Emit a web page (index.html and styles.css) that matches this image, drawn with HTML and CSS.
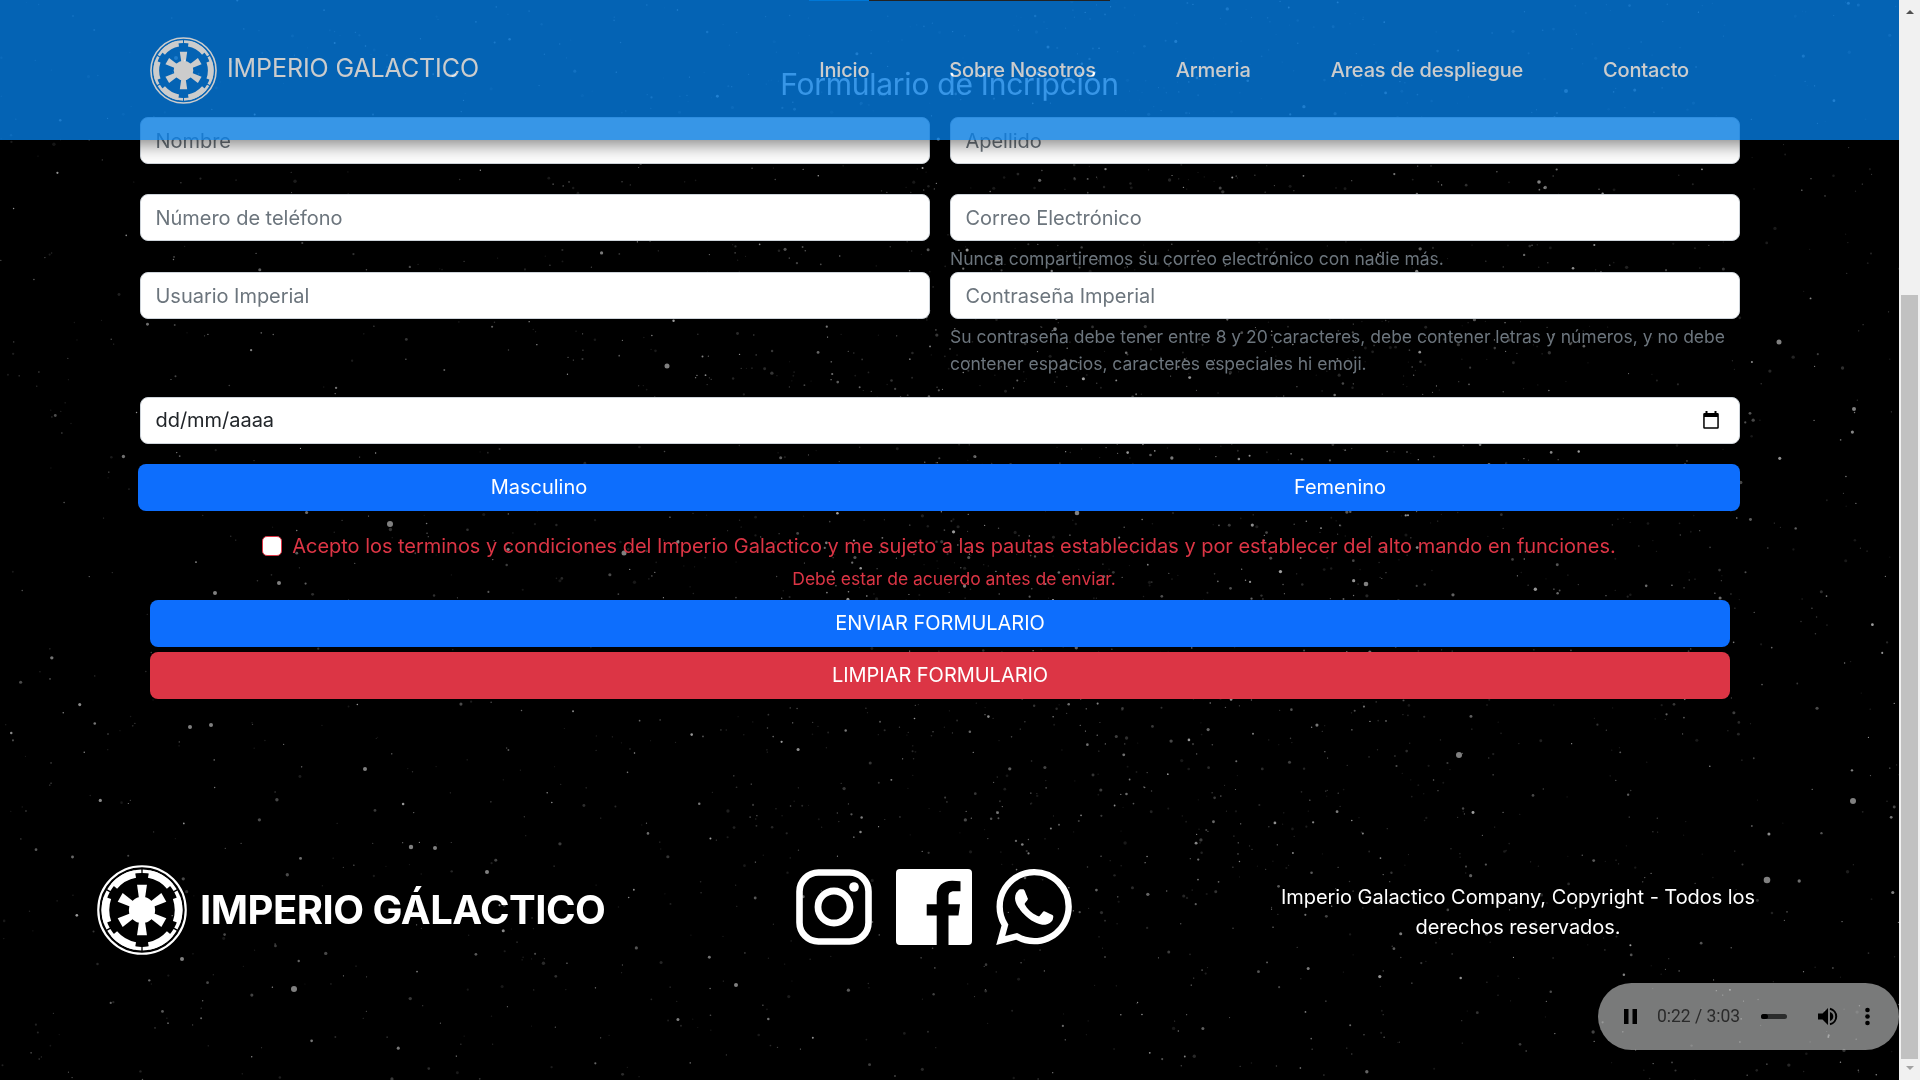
FILE: index.html
```html
<!DOCTYPE html>
<html lang="es">
<head>
<meta charset="utf-8">
<title>Imperio Galactico</title>
<link rel="stylesheet" href="styles.css">
</head>
<body>
<svg width="0" height="0" class="defs">
  <defs>
    <symbol id="emblem" viewBox="-50 -50 100 100">
      <circle r="48.600" fill="none" stroke="currentColor" stroke-width="2.400"/>
      <g fill="none" stroke="currentColor">
        <circle r="43" stroke-width="4" pathLength="360" stroke-dasharray="58 2" stroke-dashoffset="29"/>
        <circle r="40.700" stroke-width="8.600" pathLength="360" stroke-dasharray="39 21" stroke-dashoffset="19.500"/>
      </g>
      <circle r="14.600" fill="currentColor"/>
      <g fill="currentColor">
        <path id="spoke" d="M-5.500 -28H5.500L3.200 -12H-3.200Z"/>
        <use href="#spoke" transform="rotate(60)"/><use href="#spoke" transform="rotate(120)"/>
        <use href="#spoke" transform="rotate(180)"/><use href="#spoke" transform="rotate(240)"/>
        <use href="#spoke" transform="rotate(300)"/>
      </g>
    </symbol>
  </defs>
</svg>
<div class="window">
  <div class="page">
    <canvas class="stars" id="stars" width="1899" height="1080"></canvas>
    <main class="content">
      <h1 class="title">Formulario de Incripción</h1>
      <form class="form">
        <div class="field first">Nombre</div><div class="field first">Apellido</div>
        <div class="field">Número de teléfono</div>
        <div class="cell"><div class="field">Correo Electrónico</div><p class="help">Nunca compartiremos su correo electrónico con nadie más.</p></div>
        <div class="field">Usuario Imperial</div>
        <div class="cell"><div class="field">Contraseña Imperial</div><p class="help">Su contraseña debe tener entre 8 y 20 caracteres, debe contener letras y números, y no debe contener espacios, caracteres especiales hi emoji.</p></div>
        <div class="field date"><span>dd/mm/aaaa</span>
          <svg width="16" height="18" viewBox="0 0 16 18"><path d="M2.500 0h2v2h7V0h2v2H14.500a1.300 1.300 0 0 1 1.300 1.300V16.500A1.300 1.300 0 0 1 14.500 17.800H1.500A1.300 1.300 0 0 1 .2 16.500V3.300A1.300 1.300 0 0 1 1.500 2h1zM1.700 6v10.300h12.600V6z" fill-rule="evenodd"/></svg>
        </div>
      </form>
      <div class="group"><span>Masculino</span><span>Femenino</span></div>
      <div class="terms"><i class="check"></i><span>Acepto los terminos y condiciones del Imperio Galactico y me sujeto a las pautas establecidas y por establecer del alto mando en funciones.</span></div>
      <p class="warning">Debe estar de acuerdo antes de enviar.</p>
      <div class="actions"><div class="btn send">ENVIAR FORMULARIO</div><div class="btn clear">LIMPIAR FORMULARIO</div></div>
    </main>
    <footer class="footer">
      <div class="foot-brand"><svg class="foot-logo"><use href="#emblem"/></svg><strong>IMPERIO GÁLACTICO</strong></div>
      <div class="social">
        <svg viewBox="0 0 76 76"><rect x="3.500" y="3.500" width="69" height="69" rx="19" fill="none" stroke="#fff" stroke-width="6.600"/><circle cx="38" cy="38" r="16" fill="none" stroke="#fff" stroke-width="6.800"/><circle cx="58" cy="18" r="4.800" fill="#fff"/></svg>
        <svg viewBox="0 0 76 76"><path fill="#fff" d="M4 0H72A4 4 0 0 1 76 4V72A4 4 0 0 1 72 76H52.500V46.500H62.500L64 35.300H52.500V28C52.500 24.500 53.500 22.300 58.500 22.300H64.500V12.200A80 80 0 0 0 56 11.800C47 11.800 40.700 17 40.700 27V35.300H30.700V46.500H40.700V76H4A4 4 0 0 1 0 72V4A4 4 0 0 1 4 0Z"/></svg>
        <svg viewBox="0 0 24 24"><path fill="#fff" d="M17.472 14.382c-.297-.149-1.758-.867-2.030-.967-.273-.099-.471-.148-.67.150-.197.297-.767.966-.940 1.164-.173.199-.347.223-.644.075-.297-.150-1.255-.463-2.390-1.475-.883-.788-1.480-1.761-1.653-2.059-.173-.297-.018-.458.130-.606.134-.133.298-.347.446-.520.149-.174.198-.298.298-.497.099-.198.050-.371-.025-.520-.075-.149-.669-1.612-.916-2.207-.242-.579-.487-.5-.669-.510-.173-.008-.371-.010-.570-.010-.198 0-.520.074-.792.372-.272.297-1.040 1.016-1.040 2.479 0 1.462 1.065 2.875 1.213 3.074.149.198 2.096 3.200 5.077 4.487.709.306 1.262.489 1.694.625.712.227 1.360.195 1.871.118.571-.085 1.758-.719 2.006-1.413.248-.694.248-1.289.173-1.413-.074-.124-.272-.198-.570-.347m-5.421 7.403h-.004a9.870 9.870 0 01-5.031-1.378l-.361-.214-3.741.982.998-3.648-.235-.374a9.860 9.860 0 01-1.510-5.260c.001-5.450 4.436-9.884 9.888-9.884 2.640 0 5.122 1.030 6.988 2.898a9.825 9.825 0 012.893 6.994c-.003 5.450-4.437 9.884-9.885 9.884m8.413-18.297A11.815 11.815 0 0012.050 0C5.495 0 .160 5.335.157 11.892c0 2.096.547 4.142 1.588 5.945L.057 24l6.305-1.654a11.882 11.882 0 005.683 1.448h.005c6.554 0 11.890-5.335 11.893-11.893a11.821 11.821 0 00-3.480-8.413z"/></svg>
      </div>
      <p class="copy">Imperio Galactico Company, Copyright - Todos los derechos reservados.</p>
    </footer>
    <nav class="nav">
      <div class="brand"><svg class="nav-logo"><use href="#emblem"/></svg><span>IMPERIO GALACTICO</span></div>
      <div class="links"><a>Inicio</a><a>Sobre Nosotros</a><a>Armeria</a><a>Areas de despliegue</a><a>Contacto</a></div>
    </nav>
    <div class="topline"></div>
    <div class="player">
      <svg width="301" height="67" viewBox="0 0 301 67">
        <path d="M26 26h4.500v15H26zM34.500 26H39v15h-4.500z"/>
        <rect x="163" y="31" width="26" height="5" rx="2.500" fill="#2b2c2c"/><rect x="163" y="31" width="7" height="5" rx="2.500"/>
        <path d="M220 30.500h4.500l5.500-5.500v17l-5.500-5.500H220zM232 29q3.300 1.200 3.300 4.500T232 38z"/><path d="M232 25.700a8 8 0 0 1 0 15.600" fill="none" stroke="#000" stroke-width="2"/>
        <circle cx="269.500" cy="27" r="2.300"/><circle cx="269.500" cy="33.500" r="2.300"/><circle cx="269.500" cy="40" r="2.300"/>
      </svg>
      <span class="time">0:22 / 3:03</span>
    </div>
  </div>
  <div class="scroll"><i class="up"></i><div class="thumb"></div><i class="down"></i></div>
</div>
<script src="stars.js"></script>
</body>
</html>
```
FILE: styles.css
```css
* { box-sizing: border-box; margin: 0; padding: 0; }
body { width: 1920px; height: 1080px; overflow: hidden; background: #000; font: 400 20px/30px Inter, sans-serif; letter-spacing: -.03px; color: #fff; }
.defs { position: absolute; }
.window { display: flex; height: 1080px; }
.page { position: relative; width: 1899px; height: 1080px; overflow: hidden; }
.stars { position: absolute; left: 0; top: 0; }
.content { position: relative; padding: 65px 159px 0 138px; }
.title { font-size: 30px; line-height: 38px; font-weight: 400; letter-spacing: -.25px; text-align: center; padding-left: 21px; }
.form { display: grid; grid-template-columns: 790px 790px; column-gap: 20px; padding-left: 2px; margin-top: 14px; }
.field { height: 47px; padding: 0 15px 0 14.500px; border: 1px solid #ced4da; border-radius: 8px; background: #fff; color: #6c757d; line-height: 46px; }
.first { margin-bottom: 30px; }
.help { font-size: 17.500px; line-height: 27px; letter-spacing: -.02px; color: #6c757d; margin-top: 4px; }
.date { grid-column: 1 / 3; margin-top: 20px; display: flex; justify-content: space-between; align-items: center; padding: 0 20px 2px 14.500px; color: #212529; }
.group { display: flex; height: 47px; margin-top: 20px; border-radius: 8px; background: #0d6efd; line-height: 46px; text-align: center; }
.group span { flex: 1; padding-left: 1px; }
.terms { display: flex; justify-content: center; gap: 10px; margin-top: 20px; color: #dc3545; height: 30px; }
.check { width: 20px; height: 20px; margin-top: 5px; border: 1px solid #dc3545; border-radius: 5px; background: #fff; }
.warning { font-size: 17.500px; line-height: 26px; margin-top: 5px; padding-left: 30px; color: #dc3545; text-align: center; }
.actions { display: grid; gap: 5px; padding: 0 10px 0 12px; margin-top: 8px; }
.btn { height: 47px; border-radius: 8px; line-height: 46px; text-align: center; }
.send { background: #0d6efd; }
.clear { background: #dc3545; }
.footer { position: relative; display: grid; grid-template-columns: 699px 475px 1fr; align-items: start; padding: 165px 134px 0 97px; }
.foot-brand { display: flex; align-items: center; gap: 13px; height: 91px; font-size: 40px; letter-spacing: -.5px; }
.foot-logo { width: 90px; height: 90px; }
.social { display: flex; gap: 24px; padding-top: 5px; }
.social svg { width: 76px; height: 76px; }
.copy { text-align: center; padding-top: 18px; letter-spacing: -.06px; }
.nav { position: absolute; inset: 0 0 auto; height: 140px; display: flex; justify-content: space-between; align-items: center; padding: 0 210px 0 150px; background: #067ce2; opacity: .8; box-shadow: 0 4px 18px rgba(0, 0, 0, .65); }
.brand { display: flex; align-items: center; gap: 10px; font-size: 25px; }
.brand span { padding-bottom: 4px; letter-spacing: -.1px; }
.nav-logo { width: 67px; height: 67px; }
.links { display: flex; gap: 80px; font-weight: 450; letter-spacing: -.17px; }
.topline { position: absolute; left: 809px; top: 0; width: 301px; height: 1px; background: linear-gradient(90deg, #0078d7 60px, #222 60px); }
.player { position: absolute; left: 1598px; top: 983px; width: 301px; height: 67px; border-radius: 34px; background: rgba(241, 243, 244, .5); }
.time { position: absolute; left: 59px; top: 18px; font: 400 17.500px/30px Roboto, sans-serif; color: #2a2a2a; }
.scroll { display: flex; flex-direction: column; align-items: center; width: 21px; background: #f1f1f1; }
.up, .down { border: 4px solid transparent; }
.up { margin-top: 6px; border-bottom: 4px solid #505050; }
.thumb { width: 17px; height: 764px; margin-top: 281px; background: #c1c1c1; }
.down { margin-top: 7px; border-top: 4px solid #a3a3a3; }
```
FILE: stars.js
```js
// Seeded star field; density is highest right of the centre.
const ctx = document.getElementById('stars').getContext('2d');
let seed = 77;
const rnd = () => (seed = (seed * 16807) % 2147483647) / 2147483647;
for (let i = 0; i < 9500; i++) {
  const x = rnd() * 1899, y = rnd() * 1080;
  const band = Math.exp(-Math.pow((x - 1130) / 430, 2)) * Math.exp(-Math.pow((y - 440) / 420, 2));
  const keep = rnd(), b = rnd(), s = rnd();
  if (keep > 0.2 + 0.8 * band) continue;
  ctx.fillStyle = `rgba(160,160,160,${0.15 + 0.85 * b * b})`;
  ctx.beginPath();
  ctx.arc(x, y, 0.6 + s * s * s * 1.1, 0, 7);
  ctx.fill();
}
[[176,58,2],[390,524,3],[624,553,2.500],[411,847,2.200],[294,989,3],[1459,755,3],[1767,880,3.300],[1853,801,3],[1779,342,2.500],[736,985,2],[667,366,2.500],[279,583,2],[215,593,2],[182,959,2],[454,75,2.500],[1048,47,1.500],[190,727,2],[211,725,2],[365,769,2],[435,848,2],[1539,182,1.800],[1566,91,2],[1854,409,2],[487,872,2],[1077,513,2.300],[1366,584,2.300],[1055,329,1.800],[1148,337,1.800],[997,259,1.800]].forEach(([x, y, r]) => {
  ctx.fillStyle = '#808080';
  ctx.beginPath();
  ctx.arc(x, y, r, 0, 7);
  ctx.fill();
});
```
